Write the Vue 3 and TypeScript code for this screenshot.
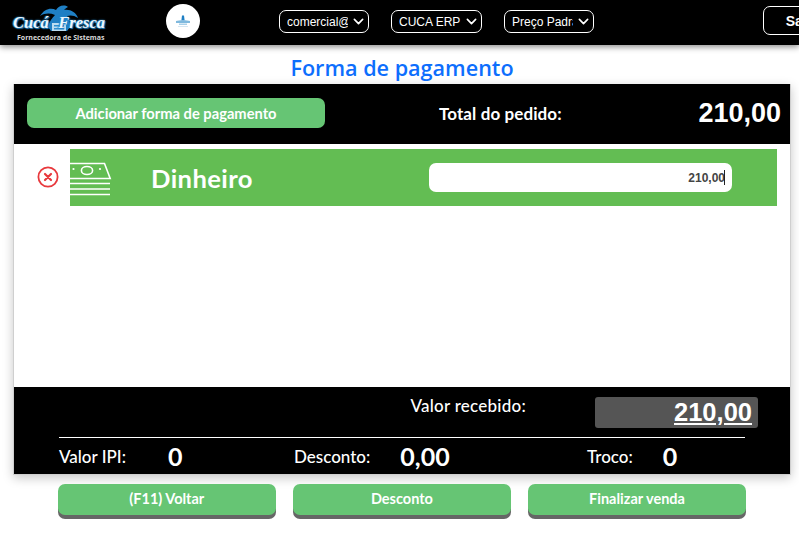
<script setup lang="ts">
const selects: string[] = ['comercial@exemplo', 'CUCA ERP', 'Preço Padrão']
const actions: string[] = ['(F11) Voltar', 'Desconto', 'Finalizar venda']
</script>

<template>
  <div class="page">
    <header class="topbar">
      <div class="logo">
        <svg class="palm" viewBox="0 0 40 28" width="40" height="28" aria-hidden="true">
          <path d="M1 12 C5 5 12 3 17 6 C19 2 25 0 29 3 C27 4 26 5 25 6 C31 5 37 8 39 14 C35 11 31 11 28 12 C30 15 31 18 31 23 L28 27 H12 L9 23 C10 18 13 14 16 11 C11 9 6 9 1 12 Z" fill="#1f7fc4" />
          <path d="M13 19 h14 v8 h-14 z" fill="#bcdcf0" />
          <path d="M15 21 h10 v1.5 h-10 z M15 24 h10 v1.5 h-10 z" fill="#2f8fd0" />
        </svg>
        <div class="logo-name"><span>Cucá</span><span>Fresca</span></div>
        <div class="logo-sub">Fornecedora de Sistemas</div>
      </div>
      <div class="avatar">
        <svg viewBox="0 0 16 13" width="16" height="13" aria-hidden="true">
          <path d="M7 0.5 h2 l0.6 5 h-3.2 z" fill="#1f7fc4" />
          <path d="M1 6 C4 5 12 5 15 6 V8 H1 Z" fill="#7fb9de" />
          <path d="M4 8.5 h8 v1.5 h-8 z" fill="#a9d0e9" />
          <path d="M3 11 h10 v1 h-10 z" fill="#d4e6f2" />
        </svg>
      </div>
      <div class="selects">
        <select v-for="s in selects" :key="s" class="sel"><option>{{ s }}</option></select>
      </div>
      <button class="exit" type="button">Sair</button>
    </header>

    <h1 class="title">Forma de pagamento</h1>

    <main class="card">
      <section class="summary">
        <button class="add" type="button">Adicionar forma de pagamento</button>
        <span class="total-label">Total do pedido:</span>
        <span class="total">210,00</span>
      </section>

      <section class="list">
        <div class="payment">
          <svg class="remove" viewBox="0 0 22 22" width="22" height="22" aria-hidden="true">
            <circle cx="11" cy="11" r="9.6" fill="none" stroke="#e8393d" stroke-width="1.8" />
            <path d="M8 8 L14 14 M14 8 L8 14" stroke="#e8393d" stroke-width="2.2" stroke-linecap="round" />
          </svg>
          <div class="band">
            <svg class="money" viewBox="0 0 42 38" width="42" height="38" aria-hidden="true">
              <g fill="none" stroke="#fff" stroke-width="1.6">
                <path d="M0 4.5 H34.5 L40.2 19.5 H0" />
                <ellipse cx="17" cy="11.5" rx="5.6" ry="4" />
                <path d="M0 24.5 H40 M0 30 H40 M0 35.5 H40" />
              </g>
              <circle cx="3.5" cy="10" r="1.1" fill="#fff" />
              <circle cx="30" cy="10" r="1.1" fill="#fff" />
            </svg>
            <span class="method">Dinheiro</span>
            <div class="amount"><span>210,00</span><i class="caret"></i></div>
          </div>
        </div>
      </section>

      <section class="footer">
        <div class="received">
          <span class="received-label">Valor recebido:</span>
          <div class="received-box"><u>210,00</u></div>
        </div>
        <div class="stats">
          <div class="stat s1"><span class="stat-label">Valor IPI:</span><b>0</b></div>
          <div class="stat s2"><span class="stat-label">Desconto:</span><b>0,00</b></div>
          <div class="stat s3"><span class="stat-label">Troco:</span><b>0</b></div>
        </div>
      </section>
    </main>

    <nav class="actions">
      <button v-for="a in actions" :key="a" class="action" type="button">{{ a }}</button>
    </nav>
  </div>
</template>

<style>
html, body { margin: 0; background: #fff; overflow: hidden; }
</style>

<style scoped>
.page {
  width: 799px;
  height: 542px;
  overflow: hidden;
  font-family: Lato, "Open Sans", sans-serif;
  background: #fff;
}
.topbar {
  position: relative;
  height: 45px;
  background: #000;
  box-shadow: 0 2px 6px rgba(0, 0, 0, .45);
  display: flex;
  align-items: flex-start;
  box-sizing: border-box;
  padding-left: 12px;
}
.logo {
  width: 94px;
  height: 45px;
  position: relative;
  flex: none;
}
.palm { position: absolute; left: 27px; top: 4px; }
.logo-name {
  position: absolute;
  left: 1px;
  top: 12px;
  width: 92px;
  display: flex;
  justify-content: space-between;
  font: italic 700 16.5px/22px "Liberation Serif", serif;
  color: #eef7fd;
  text-shadow: 0 0 2px #2f8fd0, 1px 1px 1px #1f7fc4, -1px 0 1px #1f7fc4;
}
.logo-sub {
  position: absolute;
  left: 5px;
  top: 33px;
  font: 700 7px/9px "Open Sans", sans-serif;
  color: #d8d8d8;
  white-space: nowrap;
}
.avatar {
  width: 34px;
  height: 34px;
  border-radius: 50%;
  background: #fff;
  margin: 4px 0 0 60px;
  flex: none;
  display: flex;
  align-items: center;
  justify-content: center;
}
.selects {
  display: flex;
  gap: 22px;
  margin: 10px 0 0 79px;
  flex: none;
}
.sel {
  appearance: none;
  width: 90px;
  height: 23px;
  box-sizing: border-box;
  background: #000 url("data:image/svg+xml,%3Csvg xmlns='http://www.w3.org/2000/svg' viewBox='0 0 16 16'%3E%3Cpath d='M2 5l6 6 6-6' fill='none' stroke='%23fff' stroke-width='2.4' stroke-linecap='round' stroke-linejoin='round'/%3E%3C/svg%3E") no-repeat right 4px center / 11px 11px;
  color: #fff;
  border: 1px solid #fff;
  border-radius: 7px;
  font: 12px "Liberation Sans", sans-serif;
  padding: 0 20px 0 7px;
}
.sel:nth-child(2) { width: 91px; }
.exit {
  flex: none;
  margin: 6px 0 0 169px;
  width: 72px;
  height: 29px;
  background: #000;
  color: #fff;
  border: 1px solid #fff;
  border-radius: 7px;
  font: 700 14px "Liberation Sans", sans-serif;
  padding: 0;
}
.title {
  margin: 0;
  height: 39px;
  box-sizing: border-box;
  padding-top: 10px;
  padding-left: 5px;
  text-align: center;
  font: 600 21.6px/26px "Open Sans", sans-serif;
  color: #0d6efd;
}
.card {
  margin: 0 8px 0 13px;
  height: 391px;
  box-sizing: border-box;
  border: 1px solid #cfcfcf;
  border-top: 0;
  box-shadow: 0 3px 10px rgba(0, 0, 0, .22);
  background: #fff;
  display: flex;
  flex-direction: column;
}
.summary {
  height: 60px;
  flex: none;
  background: #000;
  display: flex;
  align-items: center;
  color: #fff;
  padding: 0 0 2px 13px;
  box-sizing: border-box;
}
.add {
  width: 298px;
  height: 30px;
  background: #66c574;
  border: 0;
  border-radius: 7px;
  color: #fff;
  font: 700 14.7px Lato, sans-serif;
  padding: 0 0 1px;
}
.total-label {
  margin-left: 114px;
  font-size: 17px;
  font-weight: 700;
  letter-spacing: .1px;
}
.total {
  margin-left: auto;
  margin-right: 9px;
  font: 700 27px "Liberation Sans", sans-serif;
}
.list { flex: 1; padding-top: 5px; }
.payment {
  display: flex;
  align-items: center;
  padding-left: 23px;
  gap: 11px;
}
.remove { flex: none; margin-top: -1px; }
.band {
  width: 707px;
  height: 57px;
  background: #63bd53;
  display: flex;
  align-items: center;
  position: relative;
  color: #fff;
}
.money { flex: none; margin-top: 1px; }
.method {
  margin-left: 39px;
  font-size: 25.6px;
  font-weight: 700;
  letter-spacing: .4px;
}
.amount {
  position: absolute;
  left: 359px;
  top: 14px;
  width: 303px;
  height: 29px;
  background: #fff;
  border-radius: 7px;
  display: flex;
  align-items: center;
  justify-content: flex-end;
  padding-right: 7px;
  box-sizing: border-box;
  font: 700 12px "Liberation Sans", sans-serif;
  color: #444;
}
.caret {
  width: 1px;
  height: 15px;
  background: #222;
  margin-left: -1px;
}
.footer {
  height: 87px;
  flex: none;
  background: #000;
  color: #fff;
  box-sizing: border-box;
  padding: 10px 45px 0 45px;
}
.received {
  display: flex;
  justify-content: flex-end;
  height: 40px;
  border-bottom: 1px solid #fff;
}
.received-label {
  font-size: 17px;
  line-height: 18px;
  font-weight: 500;
  margin-right: 69px;
  letter-spacing: .25px;
}
.received-box {
  width: 163px;
  height: 31px;
  margin-right: -13px;
  background: #555;
  border-radius: 3px;
  box-sizing: border-box;
  padding-right: 6px;
  text-align: right;
  font: 700 25.5px/31px "Liberation Sans", sans-serif;
  flex: none;
}
.stats {
  display: flex;
  height: 36px;
  align-items: center;
}
.stat { display: flex; align-items: center; flex: none; }
.stat-label { font-size: 17px; font-weight: 500; }
.stat b { font-size: 25px; font-weight: 700; }
.s1 { width: 235px; }
.s1 b { margin-left: 42px; }
.s2 { width: 293px; }
.s2 b { margin-left: 30px; }
.s3 b { margin-left: 30px; }
.actions {
  display: flex;
  gap: 17.5px;
  padding: 9px 0 0 58px;
}
.action {
  width: 217.6px;
  height: 31px;
  background: #66c574;
  border: 0;
  border-radius: 7px;
  box-shadow: 0 4px 0 #666;
  color: #fff;
  font: 700 14.5px Lato, sans-serif;
  padding: 0 0 3px;
}
</style>
